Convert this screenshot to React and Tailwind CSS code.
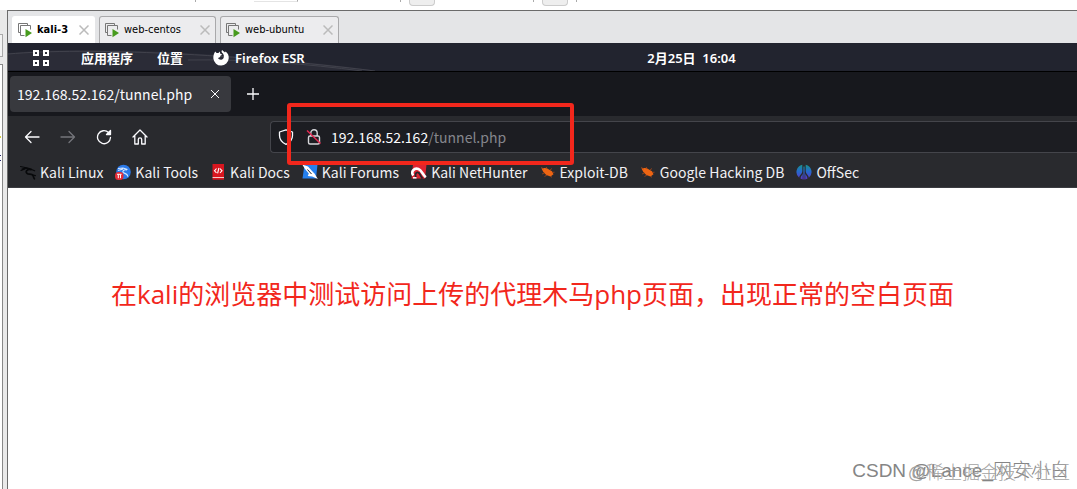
import { useState } from 'react';

const vms = [
  { name: 'kali-3', width: 'w-[83px]', active: true },
  { name: 'web-centos', width: 'w-[117px]' },
  { name: 'web-ubuntu', width: 'w-[119px]' },
];

const bookmarks = [
  { label: 'Kali Linux', icon: DragonIcon },
  { label: 'Kali Tools', icon: ToolsIcon },
  { label: 'Kali Docs', icon: DocsIcon },
  { label: 'Kali Forums', icon: ForumsIcon },
  { label: 'Kali NetHunter', icon: NetHunterIcon },
  { label: 'Exploit-DB', icon: BugIcon },
  { label: 'Google Hacking DB', icon: BugIcon },
  { label: 'OffSec', icon: OffSecIcon },
];

function DragonIcon() {
  return (
    <svg viewBox="0 0 16 16" className="size-4" fill="none" stroke="#08090b" strokeLinecap="round">
      <path d="M.5 2.5 5 3.5 9 5M2 5l4-1.2M1 6.5l4-1.5" strokeWidth="1.1" />
      <path d="M5 3.8c3 .2 4 .8 6 1.6M11 5.6C7 5 5 7.5 7 9.3c1.6 1.4 4.8.3 6 2.2.6 1 .6 2.2 1.4 3.3" strokeWidth="1.7" />
      <path d="m11 5.2 3.6 1.6M13 11l2.4.6" strokeWidth="1.2" />
    </svg>
  );
}

function ToolsIcon() {
  return (
    <svg viewBox="0 0 16 16" className="size-4" fill="none">
      <circle cx="8.5" cy="8" r="7.3" fill="#2b79e8" />
      <path d="M3 4.5 8 4l4.5 1.6M3 6.5 8 5M12 6C8.5 5.2 7 7.4 8.5 8.8c1.3 1 3.5.2 4.5 3.8" stroke="#d9e9ff" strokeWidth="1.1" />
      <rect x="0" y="8" width="8.5" height="8" rx="3.5" fill="#e42b36" />
      <path d="M2 10.3h4.6M3.3 10.5v3.7M5.5 10.5v3.7" stroke="#fff" />
    </svg>
  );
}

function DocsIcon() {
  return (
    <svg viewBox="0 0 16 16" className="size-4" fill="none">
      <path d="M2.5 0H14v13H2.5z" fill="#d9161f" />
      <path d="M2.5 14H14v1.7H2.5z" fill="#d9161f" />
      <path d="M2.5 13H14v1H2.5z" fill="#f5c9c9" />
      <path d="m6.5 4.5-2 2.3 2 2M10 4.5l2 2.3-2 2M8.9 4 7.6 9.4" stroke="#fff" strokeWidth="1.1" />
    </svg>
  );
}

function ForumsIcon() {
  return (
    <svg viewBox="0 0 16 16" className="size-4" fill="none">
      <path d="M2.5.5h13L14 14.5H.5z" fill="#2580ee" />
      <path d="M.2.5 6 2.4l4 4.6 2.5 2.5L15.8 15l-5.6-2.6-4.4-.4 1-2.5L3 5z" fill="#fff" />
      <path d="m5.5 5.5 4 4.5" stroke="#16202c" />
    </svg>
  );
}

function NetHunterIcon() {
  return (
    <svg viewBox="0 0 16 16" className="size-4" fill="none">
      <path d="M2 .5h13.5L14 14.5H.5z" fill="#dd2430" />
      <path d="M2.3 11.5C-.5 8 3 3.5 7.4 4.9c3.2 1.1 4 5.5 7.4 8.4" stroke="#fff" strokeWidth="2.6" />
      <path d="M5 13.5c-1.5-3 0-5.3 2-5 2 .2 2 3.5 4.5 6" stroke="#25262b" strokeWidth="1.8" />
      <path d="M2 13.8h3.5" stroke="#fff" strokeWidth="1.5" />
    </svg>
  );
}

function BugIcon() {
  return (
    <svg viewBox="0 0 16 16" className="size-4" fill="none">
      <path d="M1.5 4.5c3-.8 5.5-.5 7 .8l3.5 2 1.5 3-3 2.2-4.2-1.5-3-3z" fill="#ed6513" />
      <path d="m6 5 .5-2M10 6l2-1.5M12 8.5l2.5-.3M4.5 9 2 10M7 11l-2.5 1.5M11 12l.5 1.5M4 5 1 3.5" stroke="#a94817" strokeWidth=".8" />
    </svg>
  );
}

function OffSecIcon() {
  return (
    <svg viewBox="0 0 16 16" className="size-4" fill="none">
      <defs>
        <linearGradient id="offsec" gradientUnits="userSpaceOnUse" x1="0" y1="0" x2="0" y2="16">
          <stop stopColor="#169884" />
          <stop offset=".45" stopColor="#246bcc" />
          <stop offset="1" stopColor="#5f32c9" />
        </linearGradient>
      </defs>
      <path d="M6.3.7A7.5 7.5 0 0 0 3.2 13.800C3.2 11 6.300 10 6.300 7zM9.700.7a7.500 7.500 0 0 1 3.100 13.100C12.800 11 9.700 10 9.700 7zM7.400 2.500h1.200v13H7.400z" fill="url(#offsec)" />
      <path d="M6.700 9.500c-.4 1.800-2 2.800-2.200 5l2.200 1zM9.300 9.500c.4 1.800 2 2.800 2.200 5l-2.200 1z" fill="url(#offsec)" />
    </svg>
  );
}

function VmIcon() {
  return (
    <svg viewBox="0 0 16 16" className="size-4 shrink-0" fill="none">
      <path d="M3.5 10.5h-2v-9h9v2" stroke="#777" />
      <path d="M7.5 13.5h-4v-10h10v4" stroke="#777" />
      <path d="m8.5 7 6.5 4-6.5 4.3z" fill="#479b1d" />
    </svg>
  );
}

function FirefoxIcon() {
  return (
    <svg viewBox="0 0 16 16" className="size-4" fill="#fff">
      <path d="M2.2 1.5 3.6 3l1.8-.1L7 1.4l.1 2.2 2.2 1.2-2 .9-.2 1.2-2 1.1c.5 1.8 3.7 2.4 5.2.4 1.3-1.8.5-4.6-1.4-6C8.3 1.6 8.6.7 9.3.1c.6 1.1 1.7 1.4 2.7 2.3l.6-.8C15 3.3 16 5.7 15.7 8.5A7.7 7.7 0 0 1 .4 8.8C.2 6.2.7 3.6 2.2 1.5" />
    </svg>
  );
}

function NavButton({ label, children, disabled }) {
  return (
    <button type="button" aria-label={label} disabled={disabled} className="flex size-5 items-center justify-center text-[#fbfbfe] disabled:text-[#74757b]">
      <svg viewBox="0 0 16 16" className="size-4" fill="none" stroke="currentColor" strokeWidth="1.3" strokeLinecap="round" strokeLinejoin="round">
        {children}
      </svg>
    </button>
  );
}

// Bottom edge of the host window's toolbar
function HostToolbar() {
  return (
    <div className="flex h-[10px] items-start bg-white pl-[195px]">
      <i className="h-[2px] w-px bg-[#aaa]" />
      <i className="ml-[58px] h-[2px] w-11 border-r border-b border-r-[#aaa] border-b-[#e4e4e4]" />
      <i className="ml-[102px] h-[2px] w-px bg-[#aaa]" />
      <i className="ml-2 h-[6px] w-[26px] rounded-b border border-t-0 border-[#ccc] bg-[#eee]" />
      <i className="ml-[98px] h-[2px] w-px bg-[#aaa]" />
      <i className="ml-2 h-[6px] w-[26px] rounded-b border border-t-0 border-[#ccc] bg-[#eee]" />
      <i className="ml-2 h-[2px] w-px bg-[#aaa]" />
    </div>
  );
}

function VmTabs() {
  return (
    <div className="flex h-8 items-end gap-1 bg-[#e4e5e7] pl-1">
      {vms.map((vm) => (
        <div
          key={vm.name}
          className={`flex h-[27px] items-center rounded-t-[3px] border border-b-0 pl-1 pr-[5px] ${vm.width} ${
            vm.active ? 'border-white bg-white' : 'border-[#a9a9ab] bg-[#ececee]'
          }`}
        >
          <button type="button" className="flex flex-1 items-center gap-1 whitespace-nowrap">
            <VmIcon />
            <span className={`font-['DejaVu_Sans_Condensed','Liberation_Sans',sans-serif] text-[11px] leading-4 text-black ${vm.active ? 'font-bold' : ''}`}>{vm.name}</span>
          </button>
          <button type="button" aria-label={`Close ${vm.name}`}>
            <svg viewBox="0 0 10 10" className="size-[10px]" stroke="#bbb" strokeWidth="1.5">
              <path d="m.5.5 9 9M9.5.5l-9 9" />
            </svg>
          </button>
        </div>
      ))}
    </div>
  );
}

function DesktopBar() {
  return (
    <div className="relative grid h-[29px] grid-cols-[1fr_auto_1fr] items-center border-b border-black bg-[#22242f] pt-px text-[13px] font-semibold leading-5 text-white">
      <svg viewBox="0 0 380 28" className="absolute left-0 top-0 h-7 w-[380px]" fill="none">
        <path d="M0 10c85-8 230 0 364 17H0z" fill="#2b2c37" />
        <path d="M0 11c80-7 230 0 367 17M180 17c60-1 120 4 174 11" stroke="#41424c" />
      </svg>
      <div className="relative flex items-center pl-[25px]">
        <button type="button" aria-label="Activities" className="mr-8">
          <svg viewBox="0 0 16 16" className="size-4" fill="none" stroke="#fff" strokeWidth="2">
            <path d="M1 1h4v4H1zM11 1h4v4h-4zM1 11h4v4H1zM11 11h4v4h-4z" />
          </svg>
        </button>
        <button type="button" className="mr-6">应用程序</button>
        <button type="button" className="mr-[30px]">位置</button>
        <button type="button" className="flex items-center gap-[6px]">
          <FirefoxIcon />
          Firefox ESR
        </button>
      </div>
      {/* the guest screen runs past the right edge, so the clock is right of centre */}
      <time className="ml-[298px] whitespace-pre">2月25日  16:04</time>
    </div>
  );
}

function AddressBar() {
  const [path, setPath] = useState('/tunnel.php');

  return (
    <div className="relative ml-[120px] flex h-8 flex-1 items-center rounded-l border border-r-0 border-[#44454b] bg-[#1c1d22] pl-[7px]">
      <svg viewBox="0 0 16 16" className="size-4" fill="none" stroke="#fbfbfe" strokeWidth="1.3" strokeLinejoin="round">
        <path d="M8 .8 14.5 3v3.5C14.5 10.5 12 13.5 8 15.3 4 13.5 1.5 10.5 1.5 6.5V3z" />
      </svg>
      <svg viewBox="0 0 16 16" className="ml-3 size-4" fill="none" stroke="#d6d6da" strokeWidth="1.4">
        <rect x="2.5" y="7" width="11" height="8" rx="1.5" />
        <path d="M4.8 7V4a3.2 3.2 0 0 1 6.4 0v3" />
        <path d="m1 1.5 13.5 13" stroke="#e22850" strokeWidth="1.5" />
      </svg>
      <label htmlFor="path" className="ml-[9px] leading-5 text-[#fbfbfe]">192.168.52.162</label>
      <input
        id="path"
        value={path}
        onChange={(e) => setPath(e.target.value)}
        className="min-w-0 flex-1 bg-transparent leading-5 text-[#85868c] outline-none"
      />
      <div className="pointer-events-none absolute -top-[19px] left-4 h-[62px] w-[287px] rounded-[3px] border-4 border-[#f2271c]" />
    </div>
  );
}

function Browser() {
  return (
    <div className="font-['Noto_Sans_CJK_SC',sans-serif] text-sm leading-5">
      <div className="flex h-11 items-center bg-[#17181d] pl-[2px] text-[#fbfbfe]">
        <div className="flex h-9 w-[221px] items-center justify-between rounded bg-[#38393e] pl-[7px] pr-[11px]">
          <span>192.168.52.162/tunnel.php</span>
          <button type="button" aria-label="Close tab">
            <svg viewBox="0 0 10 10" className="size-[10px]" stroke="currentColor">
              <path d="m1 1 8 8M9 1 1 9" />
            </svg>
          </button>
        </div>
        <button type="button" aria-label="New tab" className="ml-4">
          <svg viewBox="0 0 12 12" className="size-3" stroke="currentColor" strokeWidth="1.3">
            <path d="M6 0v12M0 6h12" />
          </svg>
        </button>
      </div>
      <div className="flex h-[41px] items-center bg-[#292a2e] pl-[14px]">
        <div className="flex gap-4">
          <NavButton label="Back"><path d="M15 8H1.5M7 2.5 1.5 8 7 13.5" /></NavButton>
          <NavButton label="Forward" disabled><path d="M1 8h13.5M9 2.5 14.5 8 9 13.5" /></NavButton>
          <NavButton label="Reload">
            <path d="M14.5 8.5A6.5 6.5 0 1 1 12.5 3.5L14 5" />
            <path d="M14.5 1.5v4h-4z" fill="currentColor" />
          </NavButton>
          <NavButton label="Home">
            <path d="m1 8 7-7 7 7M2.8 6.5V15h3.5v-4.5a1.7 1.7 0 0 1 3.4 0V15h3.5V6.500" />
          </NavButton>
        </div>
        <AddressBar />
      </div>
      <nav className="flex h-[31px] items-center gap-3 border-b border-[#3b3c41] bg-[#292a2e] pl-3 text-[#f1f1f4]">
        {bookmarks.map(({ label, icon: Icon }) => (
          <a key={label} href="#" className="flex items-center gap-1 whitespace-nowrap">
            <Icon />
            {label}
          </a>
        ))}
      </nav>
    </div>
  );
}

export default function App() {
  return (
    <div className="flex min-h-screen flex-col overflow-hidden bg-white font-['Noto_Sans','Noto_Sans_CJK_SC',sans-serif]">
      <HostToolbar />
      <div className="flex flex-1">
        <div className="flex w-[7px] flex-col bg-[#e9e9e9] pr-1">
          <div className="mt-6 h-[23px] border border-l-0 border-[#aaa] bg-[#f3f3f3]" />
          <div className="mt-[7px] flex-1 border border-b-0 border-l-0 border-[#888] bg-white pt-[71px]">
            <div className="h-[2px] w-px bg-[#d8cf45]" />
            <div className="mt-[17px] h-[6px] w-px border-y border-[#25246b]" />
          </div>
        </div>
        <div className="flex min-w-0 flex-1 flex-col border-l border-t border-[#6b6b6b]">
          <VmTabs />
          <DesktopBar />
          <Browser />
          <main className="flex flex-1 flex-col justify-between bg-white">
            <p className="ml-[103px] mt-[86px] whitespace-nowrap font-['Open_Sans','Noto_Sans_CJK_SC',sans-serif] text-[26px] leading-10 text-[#f2271c]">
              在kali的浏览器中测试访问上传的代理木马php页面，出现正常的空白页面
            </p>
            <footer className="relative flex justify-end pb-[6px] pr-2 font-['Liberation_Sans','Noto_Sans_CJK_SC',sans-serif] font-light">
              <span className="text-[19px] leading-6 text-[#858585]">CSDN @Lance_网安小白</span>
              <span className="absolute right-[7px] top-[2px] text-lg leading-6 text-[#a3a3a3]">@稀土掘金技术社区</span>
            </footer>
          </main>
        </div>
      </div>
    </div>
  );
}
